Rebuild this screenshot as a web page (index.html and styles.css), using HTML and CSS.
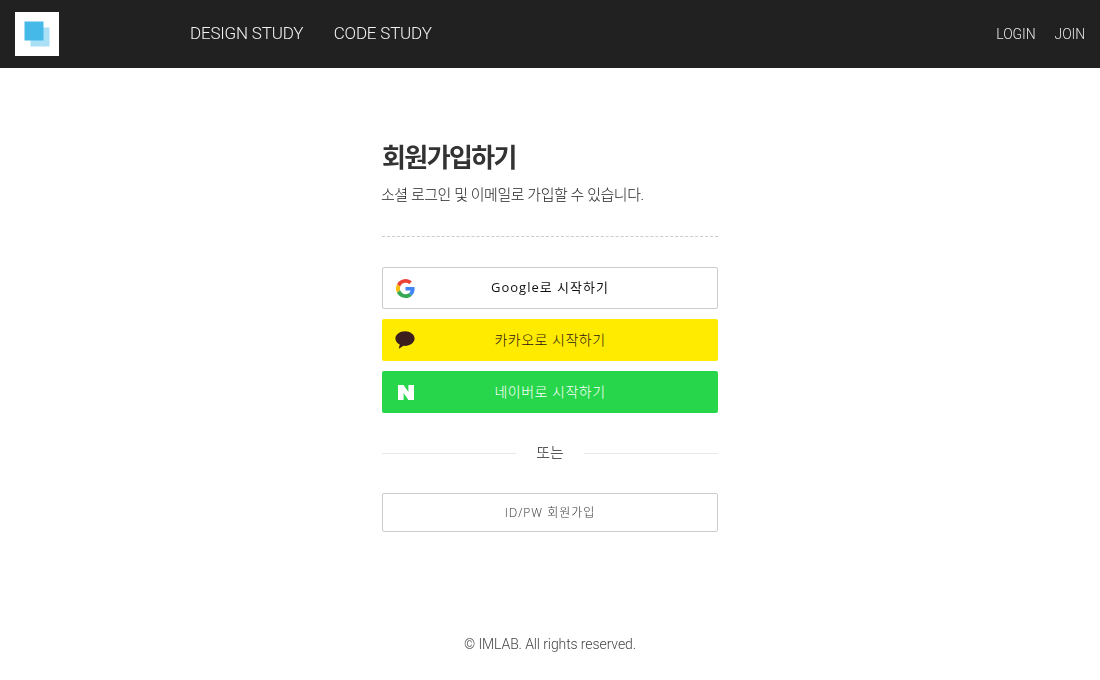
FILE: index.html
```html
<!DOCTYPE html>
<html lang="ko">
<head>
<meta charset="utf-8">
<title>회원가입하기</title>
<link rel="stylesheet" href="styles.css">
</head>
<body>
<header class="header">
  <a class="logo" href="#">
    <svg width="44" height="44" viewBox="0 0 44 44"><rect x="15.500" y="15.500" width="19" height="19" fill="#a9e0f6"/><rect x="9.500" y="9.500" width="19" height="19" fill="#45b9e8"/></svg>
  </a>
  <nav class="nav">
    <a href="#">DESIGN STUDY</a>
    <a href="#">CODE STUDY</a>
  </nav>
  <nav class="auth">
    <a href="#">LOGIN</a>
    <a href="#">JOIN</a>
  </nav>
</header>
<main class="main">
  <h1 class="title">회원가입하기</h1>
  <p class="sub">소셜 로그인 및 이메일로 가입할 수 있습니다.</p>
  <hr class="dash">
  <div class="socials">
    <a class="btn google" href="#">
      <svg class="ico" width="19" height="19" viewBox="0 0 48 48"><path fill="#EA4335" d="M24 9.500c3.540 0 6.710 1.220 9.210 3.600l6.850-6.850C35.900 2.380 30.470 0 24 0 14.620 0 6.510 5.380 2.560 13.220l7.980 6.190C12.430 13.720 17.740 9.500 24 9.500z"/><path fill="#4285F4" d="M46.980 24.550c0-1.570-.15-3.090-.38-4.550H24v9.020h12.940c-.58 2.960-2.260 5.480-4.780 7.180l7.730 6c4.510-4.180 7.090-10.360 7.090-17.650z"/><path fill="#FBBC05" d="M10.530 28.590c-.48-1.450-.76-2.990-.76-4.590s.27-3.140.76-4.590l-7.980-6.190C.92 16.460 0 20.120 0 24c0 3.880.92 7.540 2.560 10.780l7.970-6.190z"/><path fill="#34A853" d="M24 48c6.480 0 11.930-2.130 15.890-5.810l-7.730-6c-2.150 1.450-4.920 2.300-8.160 2.300-6.260 0-11.570-4.220-13.470-9.910l-7.980 6.190C6.510 42.620 14.620 48 24 48z"/></svg>
      <span>Google로 시작하기</span>
    </a>
    <a class="btn kakao" href="#">
      <svg class="ico" width="20" height="20" viewBox="0 0 20 20"><path fill="#3c1e1e" d="M10 1.200C4.700 1.200.4 4.500.4 8.500c0 2.500 1.800 4.800 4.400 6.100L3.800 18.300c-.1.300.2.500.5.300l4.200-2.800c.5.100 1 .1 1.500.1 5.300 0 9.600-3.400 9.600-7.400S15.300 1.200 10 1.200z"/></svg>
      <span>카카오로 시작하기</span>
    </a>
    <a class="btn naver" href="#">
      <svg class="ico" width="20" height="20" viewBox="0 0 20 20"><path fill="#fff" d="M2 3h5.600l4.800 7V3H18v15h-5.600l-4.800-7v7H2z"/></svg>
      <span>네이버로 시작하기</span>
    </a>
  </div>
  <div class="or"><span>또는</span></div>
  <a class="btn idpw" href="#"><span>ID/PW 회원가입</span></a>
</main>
<footer class="footer">© IMLAB. All rights reserved.</footer>
</body>
</html>
```

FILE: styles.css
```css
* { box-sizing: border-box; }
html, body { margin: 0; padding: 0; }
body {
  height: 680px;
  background: #fff;
  color: #333;
  font-family: Roboto, "Noto Sans CJK KR", sans-serif;
  font-weight: 300;
  display: flex;
  flex-direction: column;
  overflow: hidden;
}
a { color: inherit; text-decoration: none; }
.header {
  height: 68px;
  flex: none;
  background: #212121;
  display: flex;
  align-items: center;
  padding: 0 15px;
}
.logo { width: 44px; height: 44px; background: #fff; display: block; flex: none; }
.logo svg { display: block; }
.nav {
  margin-left: 131px;
  display: flex;
  gap: 30.5px;
  font-size: 17px;
  letter-spacing: -0.2px;
  line-height: 20px;
  padding-bottom: 3px;
  color: #f2f2f2;
  will-change: opacity;
}
.auth {
  margin-left: auto;
  display: flex;
  gap: 19px;
  font-size: 14px;
  letter-spacing: -0.1px;
  color: #e6e6e6;
  will-change: opacity;
}
.main {
  width: 336px;
  margin: 0 auto;
  padding-top: 71px;
  flex: 1;
  will-change: opacity;
}
.title {
  margin: 0;
  font-family: Roboto, "Noto Sans CJK KR", sans-serif;
  font-size: 26px;
  line-height: 38px;
  font-weight: 700;
  letter-spacing: -1.6px;
  color: #333;
}
.sub {
  margin: 7px 0 0 -1px;
  font-size: 15px;
  line-height: 22px;
  letter-spacing: -0.45px;
  color: #222;
}
.dash {
  margin: 30px 0;
  border: 0;
  border-top: 1px dashed #ccc;
  height: 0;
}
.socials { display: flex; flex-direction: column; gap: 10px; }
.btn {
  position: relative;
  display: flex;
  align-items: center;
  justify-content: center;
  height: 42px;
  padding-bottom: 2px;
  border-radius: 2px;
  font-family: "Open Sans", "Noto Sans CJK KR", sans-serif;
  font-weight: 300;
  font-size: 14px;
  letter-spacing: 0.5px;
}
.ico { position: absolute; left: 13px; top: 11px; }
.google {
  border: 1px solid #ccc;
  padding-bottom: 4px;
  color: #111;
  font-size: 13px;
  font-weight: 400;
  letter-spacing: 1px;
}
.kakao { background: #ffeb00; color: #2b1515; }
.naver { background: #28d64c; color: #fff; }
.naver .ico { left: 14px; }
.or {
  display: flex;
  align-items: center;
  gap: 20px;
  margin: 29px 0 28px;
  height: 23px;
  font-size: 15px;
  color: #222;
}
.or span { margin-top: -5px; }
.or::before, .or::after { content: ""; flex: 1; height: 1px; background: #e8e8e8; }
.idpw {
  height: 39px;
  border: 1px solid #ccc;
  font-size: 12px;
  letter-spacing: 1px;
  color: #333;
}
.footer {
  flex: none;
  text-align: center;
  font-size: 14px;
  line-height: 20px;
  letter-spacing: -0.1px;
  padding-bottom: 26px;
  color: #444;
  will-change: opacity;
}
```
